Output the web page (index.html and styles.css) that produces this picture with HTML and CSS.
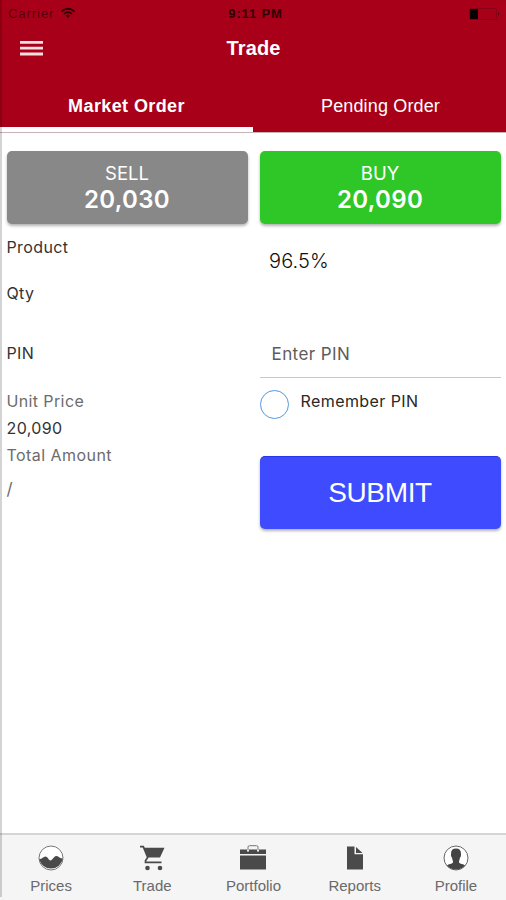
FILE: index.html
```html
<!DOCTYPE html>
<html lang="en">
<head>
<meta charset="utf-8">
<title>Trade</title>
<link rel="stylesheet" href="styles.css">
</head>
<body>
<div class="app">
  <header class="header">
    <div class="status">
      <div class="carrier"><span>Carrier</span>
        <svg class="wifi" width="16" height="12" viewBox="0 0 16 12" fill="none" stroke="#300006" stroke-width="1.9"><path d="M1.500 4.400Q8 -1 14.500 4.400M4 7Q8 3.600 12 7"/><path d="M8 11L5.700 8.600Q8 6.900 10.300 8.600Z" fill="#300006" stroke="none"/></svg>
      </div>
      <span class="time">9:11 PM</span>
      <svg class="battery" width="31" height="12" viewBox="0 0 31 12"><rect x=".5" y=".5" width="27" height="11" rx="1.500" fill="none" stroke="#8c0016"/><rect x="1" y="1" width="8" height="10" rx="1" fill="#080001"/><path d="M29 4Q31 6 29 8Z" fill="#400009"/></svg>
    </div>
    <div class="titlebar">
      <svg class="menu" width="23" height="15" viewBox="0 0 23 15" fill="#fadfe0"><path d="M0 0h23v2.700H0zM0 5.800h23v2.700H0zM0 11.600h23v2.900H0z"/></svg>
      <h1 class="title">Trade</h1>
    </div>
    <nav class="tabs">
      <div class="tab tab-active"><span>Market Order</span></div>
      <div class="tab"><span>Pending Order</span></div>
    </nav>
  </header>
  <main class="content">
    <div class="column">
      <button class="quote sell"><span class="side">SELL</span><span class="price">20,030</span></button>
      <div class="label product">Product</div>
      <div class="label qty">Qty</div>
      <div class="label pin">PIN</div>
      <div class="label muted unit">Unit Price</div>
      <div class="label amount">20,090</div>
      <div class="label muted total">Total Amount</div>
      <div class="label muted slash">/</div>
    </div>
    <div class="column">
      <button class="quote buy"><span class="side">BUY</span><span class="price">20,090</span></button>
      <div class="purity">96.5%</div>
      <div class="pin-field"><span>Enter PIN</span></div>
      <div class="remember"><span class="radio"></span><span class="remember-text">Remember PIN</span></div>
      <button class="submit"><span>SUBMIT</span></button>
    </div>
  </main>
  <nav class="bottom">
    <div class="item">
      <svg width="26" height="26" viewBox="0 0 26 26"><circle cx="13" cy="13" r="12" fill="#fff" stroke="#777"/><path d="M1.200 14C4 14.500 5 11.500 7.500 11.500S10.500 15.500 12.500 15.500S16 10.500 18.500 11S22 13.500 24.800 13.500A12 12 0 0 1 1.200 14Z" fill="#4a4a4a"/></svg>
      <span>Prices</span>
    </div>
    <div class="item">
      <svg width="26" height="26" viewBox="0 0 26 26"><path d="M1 1.700H4.300L8.700 12.400L6.500 15.700V17.300H22.500" fill="none" stroke="#4a4a4a" stroke-width="1.700"/><path d="M5 2.700H25.500L21 12.500H9.200Z" fill="#4a4a4a"/><circle cx="8.500" cy="23" r="2.300" fill="#4a4a4a"/><circle cx="21" cy="23" r="2.300" fill="#4a4a4a"/></svg>
      <span>Trade</span>
    </div>
    <div class="item">
      <svg width="26" height="26" viewBox="0 0 26 26"><path d="M8 5V2Q8 .7 9.500 .7H16.500Q18 .7 18 2V5" fill="none" stroke="#777"/><path d="M0 4.500H7V6.500H9V4.500H17V6.500H19V4.500H26V9H0ZM0 10.500H26V24.500H0Z" fill="#4a4a4a"/></svg>
      <span>Portfolio</span>
    </div>
    <div class="item">
      <svg width="26" height="26" viewBox="0 0 26 26"><path d="M5 1.500H12.500V9.300H21V24.500H5ZM14 2L20.500 8H14Z" fill="#4a4a4a"/></svg>
      <span>Reports</span>
    </div>
    <div class="item">
      <svg width="26" height="26" viewBox="0 0 26 26"><circle cx="13" cy="13" r="12" fill="#fff" stroke="#666"/><path d="M13 3.500C16.700 3.500 18.200 5.500 17.900 9C18.400 10.500 17.500 12 17 12.800C16.500 15 16 15.500 16 17.500C17 19 20.500 19 22 20.500A12 12 0 0 1 4 20.500C5.500 19 9 19 10 17.500C10 15.500 9.500 15 9 12.800C8.500 12 7.600 10.500 8.100 9C7.800 5.500 9.300 3.500 13 3.500Z" fill="#444"/></svg>
      <span>Profile</span>
    </div>
  </nav>
  <div class="edge"></div>
</div>
</body>
</html>
```
FILE: styles.css
```css
* { box-sizing: border-box; }
body { margin: 0; background: #fff; font-family: Inter, sans-serif; }
.app { position: relative; width: 506px; height: 900px; display: flex; flex-direction: column; overflow: hidden; }
.edge { position: absolute; left: 0; top: 0; width: 2px; height: 897px; background: rgba(0,0,0,.17); }
h1, button { margin: 0; padding: 0; border: 0; font: inherit; }

.header { height: 133px; background: #a90019; color: #fff; font-family: "Liberation Sans", sans-serif; border-bottom: 1px solid #c9b3b6; }
.status { height: 27px; display: grid; grid-template-columns: 1fr auto 1fr; align-items: center; padding: 0 6px 0 8px; color: #5d000d; font-size: 13px; }
.carrier { display: flex; gap: 6px; align-items: center; letter-spacing: .95px; }
.wifi { margin-top: -2px; }
.time { color: #300006; font-weight: bold; letter-spacing: .85px; padding-left: 3px; }
.battery { justify-self: end; }
.titlebar { height: 43px; display: grid; grid-template-columns: 1fr auto 1fr; align-items: center; padding: 0 20px; }
.title { font-size: 20px; font-weight: bold; padding-left: 1px; letter-spacing: .1px; }
.tabs { height: 62px; display: flex; }
.tab { width: 50%; padding-top: 10px; height: 62px; line-height: 52px; text-align: center; font-size: 18px; letter-spacing: .15px; border-bottom: 5px solid transparent; }
.tab:last-child { padding-left: 2px; }
.tab-active { font-weight: bold; letter-spacing: .4px; border-color: #fff; }

.content { flex: 1; display: grid; grid-template-columns: 241px 241px; column-gap: 12px; padding: 18px 0 0 6.5px; }
.column { display: flex; flex-direction: column; }
.quote, .submit { width: 241px; height: 73px; border-radius: 5px; color: #fff; box-shadow: 0 2px 3px rgba(0,0,0,.3); flex: none; }
.quote { display: flex; flex-direction: column; align-items: center; padding-top: 10px; }
.sell { background: #888; }
.buy { background: #2fc727; }
.side { font-size: 18.5px; line-height: 25px; }
.price { font-size: 24px; line-height: 28px; font-weight: 600; letter-spacing: .35px; }
.label { font-size: 16px; line-height: 27px; color: #333; letter-spacing: .38px; }
.muted { color: #6c6c6c; }
.product { margin-top: 10px; }
.qty { margin-top: 19px; }
.pin { margin-top: 33px; }
.unit { margin-top: 21px; }
.total { letter-spacing: .45px; }
.slash { margin-top: 7px; font-size: 17px; }
.purity { margin: 23px 0 0 9.5px; font-size: 20px; line-height: 28px; font-weight: 300; letter-spacing: .1px; color: #111; }
.pin-field { height: 49px; margin-top: 54px; padding-left: 12px; line-height: 50px; border-bottom: 1px solid #c8c8c8; font-size: 17px; letter-spacing: .42px; color: #5c5c5c; }
.remember { display: flex; gap: 12px; height: 78px; padding-top: 12px; font-size: 16px; letter-spacing: .42px; }
.radio { width: 29px; height: 29px; border: 1px solid #4f9ae6; border-radius: 50%; }
.remember-text { line-height: 22px; color: #282828; }
.submit { background: #3e4bff; border-top: 1px solid #2936e8; font-family: "Liberation Sans", sans-serif; font-size: 28px; letter-spacing: -.35px; }

.bottom { height: 67px; flex: none; display: grid; grid-template-columns: repeat(5, 1fr); background: #f5f5f5; border-top: 2px solid #d5d5d5; font-family: "Liberation Sans", sans-serif; font-size: 15px; color: #6a6a6a; }
.item { display: flex; flex-direction: column; align-items: center; padding: 10px 0 0 1px; }
.item span { line-height: 18px; margin-top: 6px; }
```
